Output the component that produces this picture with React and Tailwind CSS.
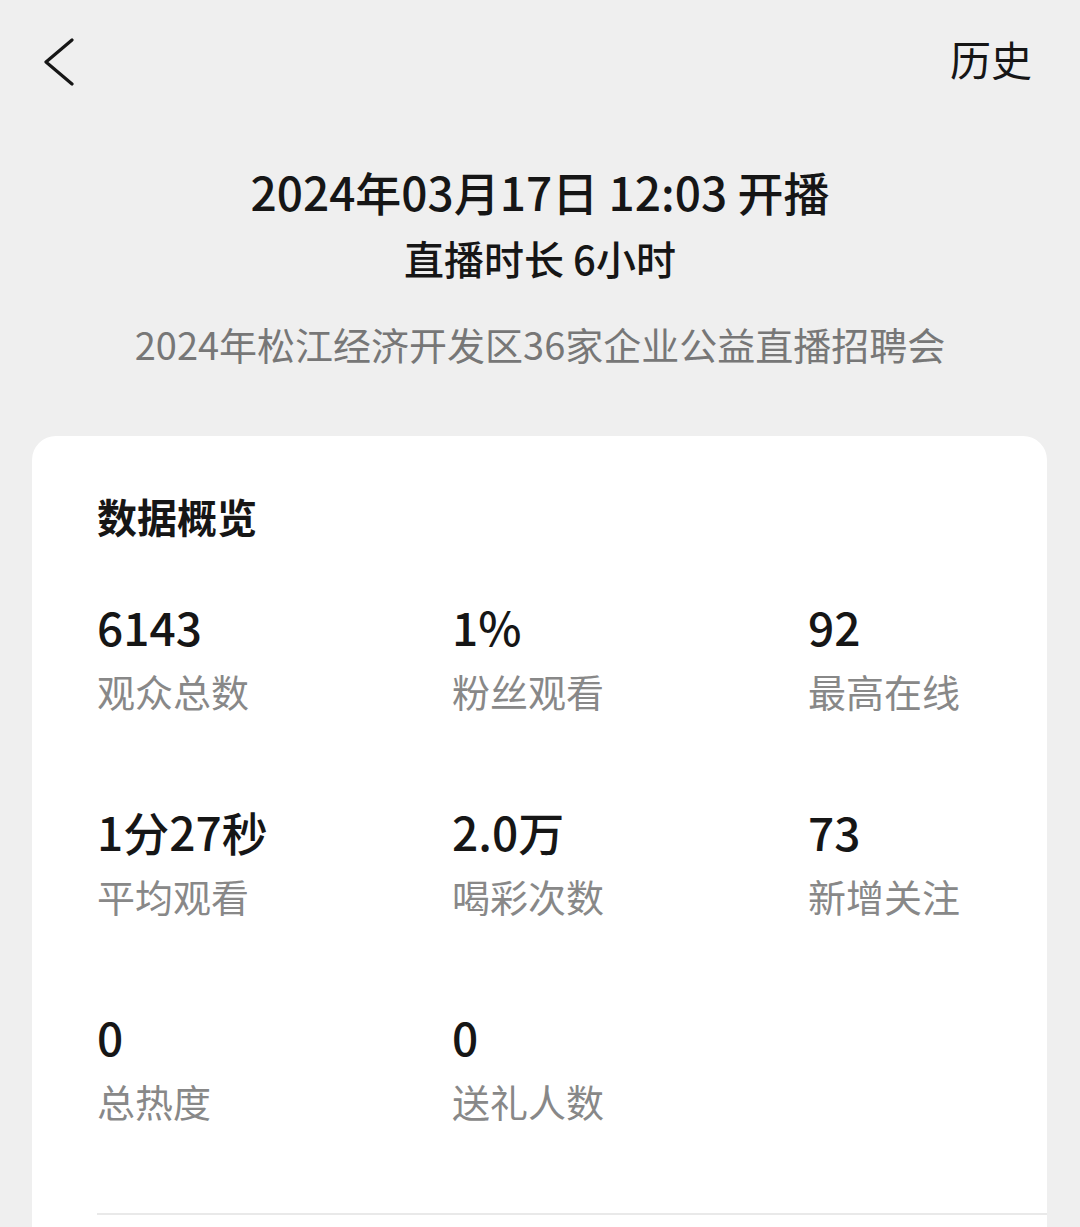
import React from "react";

const stats = [
  { value: "6143", label: "观众总数" },
  { value: "1%", label: "粉丝观看" },
  { value: "92", label: "最高在线" },
  { value: "1分27秒", label: "平均观看" },
  { value: "2.0万", label: "喝彩次数" },
  { value: "73", label: "新增关注" },
  { value: "0", label: "总热度" },
  { value: "0", label: "送礼人数" },
];

export default function App() {
  return (
    <div
      className="h-[1227px] overflow-hidden bg-[#efefef] text-[#161616]"
      style={{ fontFamily: '"Noto Sans CJK SC", "Noto Sans", sans-serif' }}
    >
      {/* top bar */}
      <div className="flex h-[116px] items-center justify-between pl-[43px] pr-[48px]">
        <svg className="mt-[8px]" width="32" height="48" viewBox="0 0 32 48" fill="none">
          <path d="M29 2 L3 24 L29 46" stroke="#161616" strokeWidth="3.2" strokeLinecap="round" strokeLinejoin="round" />
        </svg>
        <span className="text-[41px] leading-[48px]">历史</span>
      </div>

      {/* header */}
      <div className="flex flex-col items-center text-center">
        <div className="mt-[51px] text-[46px] font-medium leading-[48px]">2024年03月17日 12:03 开播</div>
        <div className="mt-[21px] text-[40px] font-medium leading-[44px]">直播时长 6小时</div>
        <div className="mt-[42px] text-[38px] leading-[44px] text-[#777]">
          2024年松江经济开发区36家企业公益直播招聘会
        </div>
      </div>

      {/* card */}
      <div className="ml-[32px] mr-[33px] mt-[70px] rounded-t-[24px] bg-white pt-[56px] pb-[40px]">
        <div className="pl-[65px] text-[40px] font-semibold leading-[48px]">数据概览</div>
        <div className="mt-[60px] grid grid-cols-[355px_356px_1fr] gap-y-[91px] pl-[65px]">
          {stats.map((s, i) => (
            <div key={i} className="flex flex-col">
              <div className="text-[46px] font-medium leading-[52px]">{s.value}</div>
              <div className="mt-[16px] text-[38px] leading-[46px] text-[#888]">{s.label}</div>
            </div>
          ))}
        </div>
        <div className="ml-[65px] mt-[89px] h-[2px] bg-[#e9e9e9]" />
      </div>
    </div>
  );
}
